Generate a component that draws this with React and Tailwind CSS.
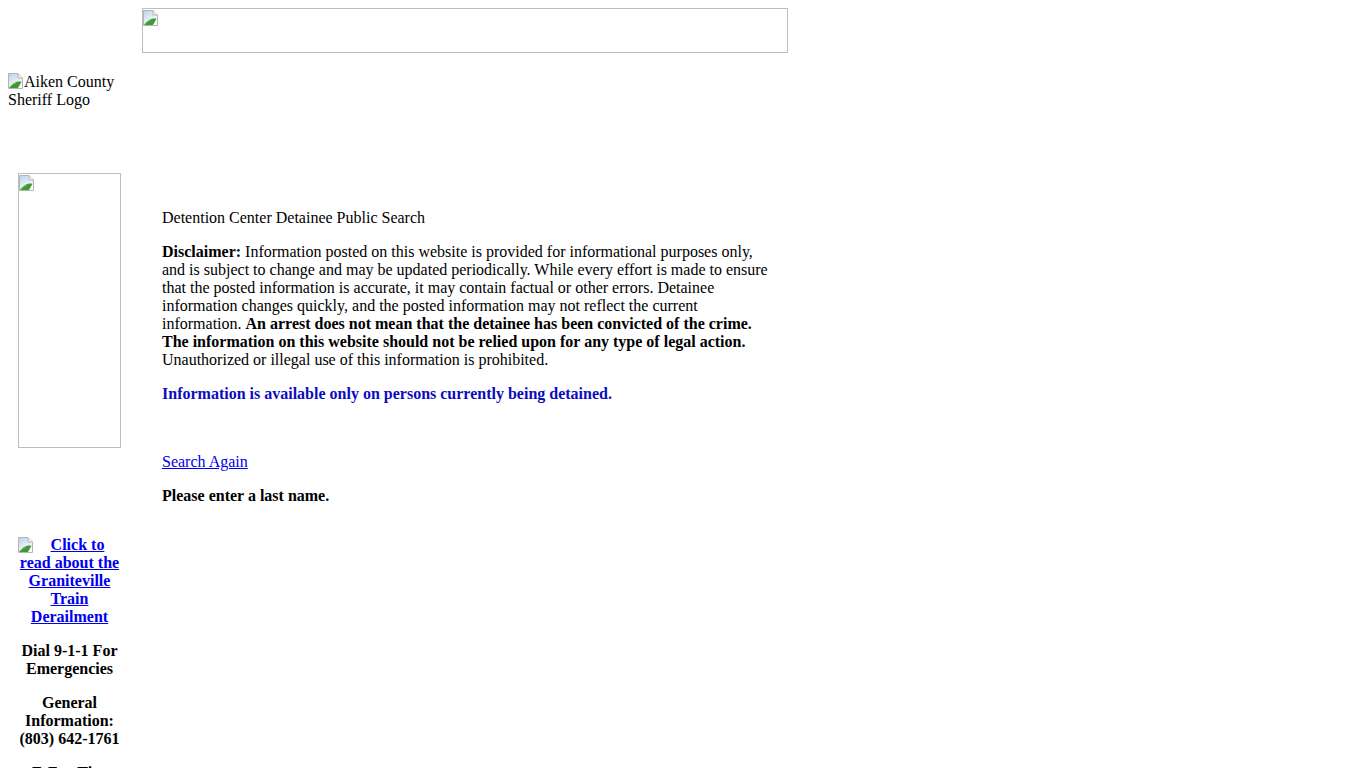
import React from "react";

// Chrome-style placeholder glyph shown for an image that failed to load
function BrokenImg({ className = "" }) {
  return (
    <svg
      width="16"
      height="16"
      viewBox="0 0 16 16"
      className={"shrink-0 " + className}
      aria-hidden="true"
    >
      <defs>
        <linearGradient id="sky" x1="0" y1="0" x2="0.6" y2="1">
          <stop offset="0" stopColor="#b7d0ea" />
          <stop offset="0.6" stopColor="#e6eef7" />
          <stop offset="1" stopColor="#ffffff" />
        </linearGradient>
      </defs>
      <path d="M0.5 0.5h9.5l4.5 4.5v10.5h-14z" fill="url(#sky)" stroke="#b4b4b4" />
      <path d="M10 0.5v4.5h4.5" fill="#f2f2f2" stroke="#b4b4b4" />
      <path d="M1 15c2.5-3.5 5.5-6 9-6.5 1.5-.2 2.8 0 3.5.3L10 15z" fill="#3f9a35" />
      <path d="M1 15c2-2.6 4.3-4.4 6.8-5.2" stroke="#8ccb6a" strokeWidth="1" fill="none" />
    </svg>
  );
}

export default function App() {
  return (
    <div className="min-h-screen bg-white p-2 text-[16px] leading-[18px] text-black [font-family:'Liberation_Serif','Times_New_Roman',serif]">
      {/* top banner */}
      <div className="pl-[134px]">
        <div className="h-[45px] w-[646px] border border-[#bdbdbd] pt-[1px]">
          <BrokenImg />
        </div>
      </div>

      {/* sheriff logo (alt text) */}
      <div className="mt-5 h-[100px] w-[120px]">
        <BrokenImg className="inline-block align-[-2px]" />
        Aiken County Sheriff Logo
      </div>

      <div className="flex">
        {/* left column */}
        <div className="ml-[10px] flex w-[103px] shrink-0 flex-col text-center">
          <div className="h-[275px] w-[103px] border border-[#bdbdbd] pt-[1px]">
            <BrokenImg />
          </div>

          <a href="#" className="mt-[88px] block font-bold text-[#0000ee] underline">
            <BrokenImg className="float-left mt-[1px]" />
            Click to read about the Graniteville Train Derailment
          </a>

          <p className="mt-4 font-bold">Dial 9-1-1 For Emergencies</p>
          <p className="mt-4 font-bold">
            General Information:
            <br />
            (803) 642-1761
          </p>
          <p className="mt-4 font-bold">E-Fax Tips</p>
        </div>

        {/* main content */}
        <div className="ml-[41px] w-[612px] pt-9">
          <p>Detention Center Detainee Public Search</p>
          <p className="mt-4">
            <b>Disclaimer:</b> Information posted on this website is provided for
            informational purposes only, and is subject to change and may be updated
            periodically. While every effort is made to ensure that the posted
            information is accurate, it may contain factual or other errors. Detainee
            information changes quickly, and the posted information may not reflect the
            current information.{" "}
            <b>
              An arrest does not mean that the detainee has been convicted of the crime.
              The information on this website should not be relied upon for any type of
              legal action.
            </b>{" "}
            Unauthorized or illegal use of this information is prohibited.
          </p>
          <p className="mt-4 font-bold text-[#0c0cbf]">
            Information is available only on persons currently being detained.
          </p>
          <p className="mt-4">
            <br />
          </p>
          <p className="mt-4">
            <a href="#" className="text-[#0000ee] underline">
              Search Again
            </a>
          </p>
          <p className="mt-4 font-bold">Please enter a last name.</p>
        </div>
      </div>
    </div>
  );
}
